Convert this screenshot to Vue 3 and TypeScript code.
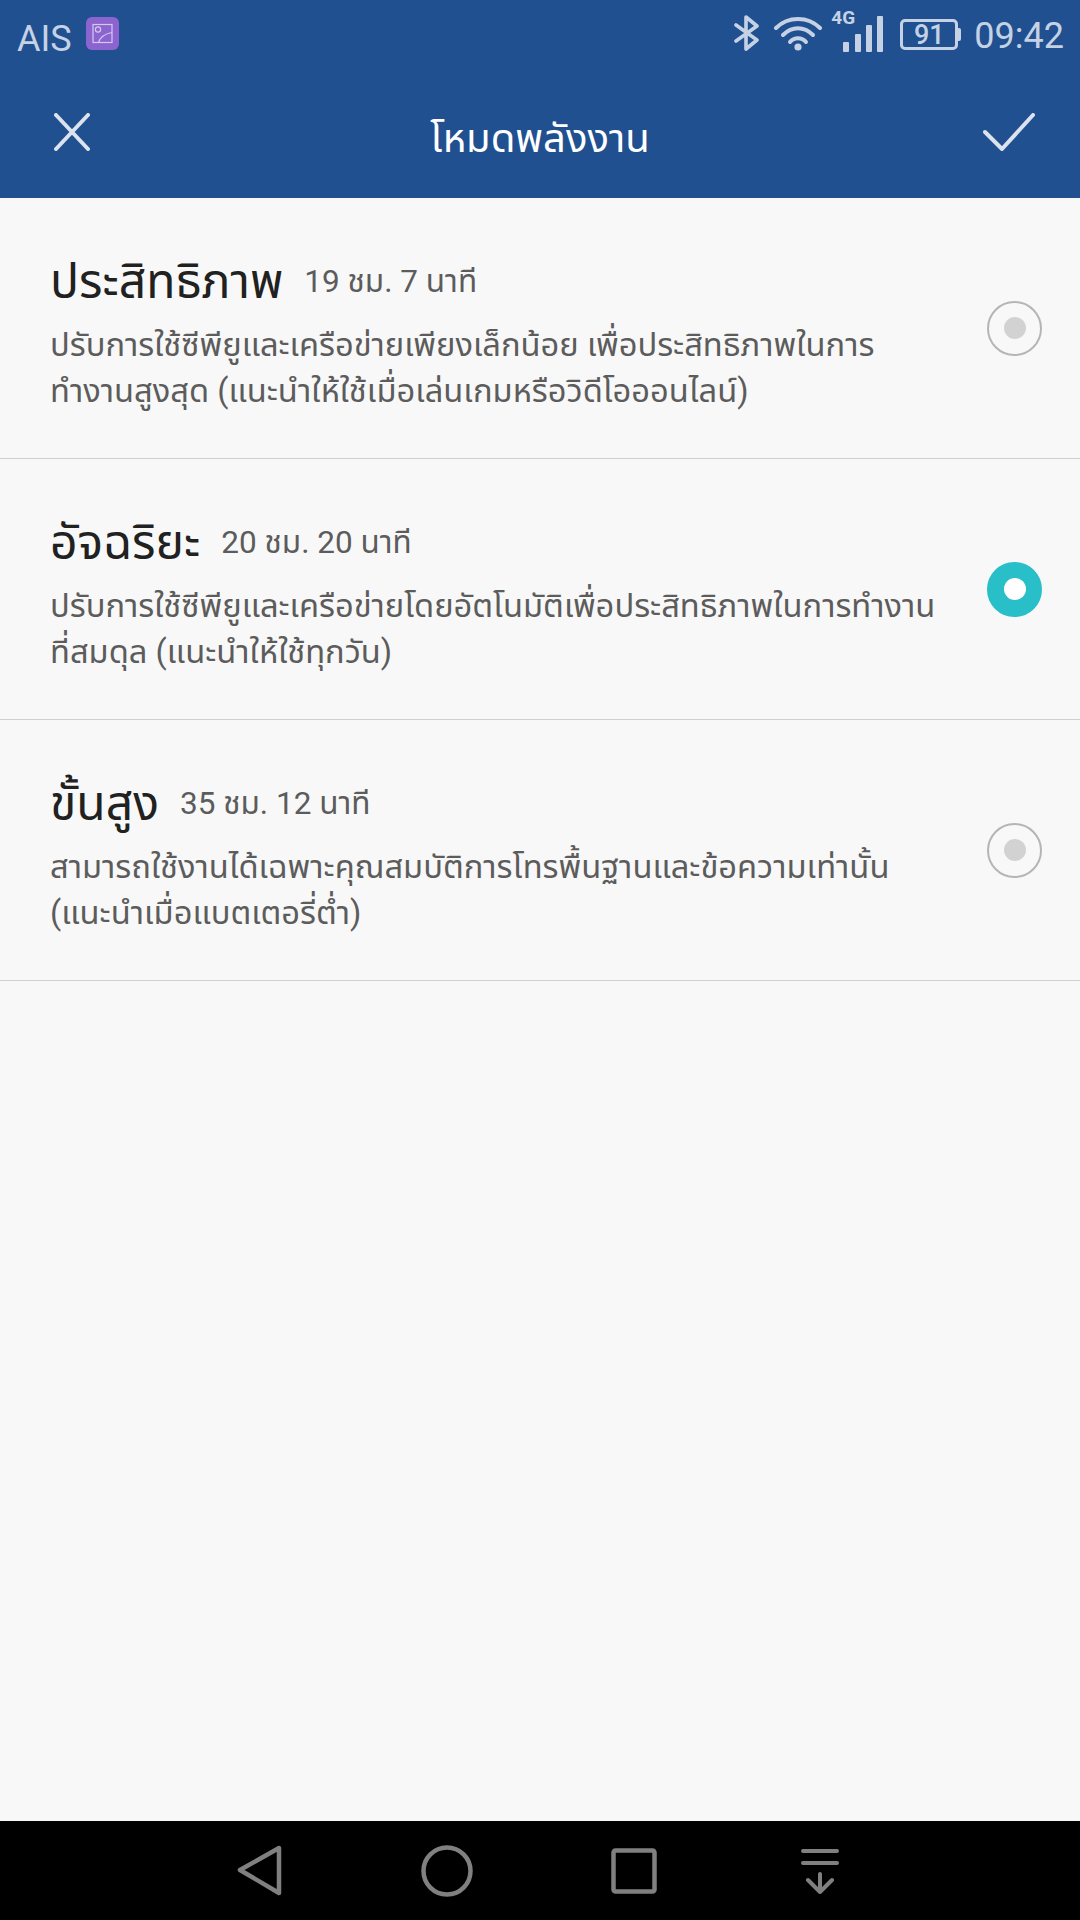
<script setup lang="ts">
interface Mode { title: string; time: string; lines: string[]; selected: boolean }
const modes: Mode[] = [
  { title: 'ประสิทธิภาพ', time: '19 ชม. 7 นาที', lines: ['ปรับการใช้ซีพียูและเครือข่ายเพียงเล็กน้อย เพื่อประสิทธิภาพในการ', 'ทำงานสูงสุด (แนะนำให้ใช้เมื่อเล่นเกมหรือวิดีโอออนไลน์)'], selected: false },
  { title: 'อัจฉริยะ', time: '20 ชม. 20 นาที', lines: ['ปรับการใช้ซีพียูและเครือข่ายโดยอัตโนมัติเพื่อประสิทธิภาพในการทำงาน', 'ที่สมดุล (แนะนำให้ใช้ทุกวัน)'], selected: true },
  { title: 'ขั้นสูง', time: '35 ชม. 12 นาที', lines: ['สามารถใช้งานได้เฉพาะคุณสมบัติการโทรพื้นฐานและข้อความเท่านั้น', '(แนะนำเมื่อแบตเตอรี่ต่ำ)'], selected: false },
]
</script>

<template>
  <div class="screen">
    <div class="top">
      <div class="status">
        <div class="status-left">
          <span class="carrier">AIS</span>
          <svg class="gallery" width="33" height="33" viewBox="0 0 33 33">
            <rect width="33" height="33" rx="6" fill="#8c64cf" />
            <rect x="7" y="7.5" width="19" height="18" fill="none" stroke="#d5c8ee" stroke-width="1.2" />
            <circle cx="12" cy="12.5" r="2.6" fill="none" stroke="#d5c8ee" stroke-width="1.2" />
            <path d="M12.5 25.5C14 20 18 17 26 15.5" fill="none" stroke="#d5c8ee" stroke-width="1.2" />
          </svg>
        </div>
        <div class="status-right">
          <svg class="bt" width="26" height="36" viewBox="0 0 26 36" fill="none" stroke="#c5d2e5" stroke-width="3.6" stroke-linejoin="round" stroke-linecap="round">
            <path d="M2 10L23 25L12 34V2L23 11L2 26" />
          </svg>
          <svg class="wifi" width="48" height="36" viewBox="0 0 48 36" fill="none" stroke="#c5d2e5" stroke-width="4" stroke-linecap="round">
            <path d="M2 13C14 1 34 1 46 13" />
            <path d="M9 20C18 11 30 11 39 20" />
            <path d="M16 27C20 22 28 22 32 27" />
            <circle cx="24" cy="32" r="3.6" fill="#c5d2e5" stroke="none" />
          </svg>
          <div class="signal">
            <span class="net">4G</span>
            <svg width="42" height="36" viewBox="0 0 42 36" fill="#c5d2e5">
              <rect x="1" y="26" width="6" height="10" rx="1" />
              <rect x="13" y="18" width="6" height="18" rx="1" />
              <rect x="24" y="9" width="6" height="27" rx="1" />
              <rect x="35" y="0" width="6" height="36" rx="1" />
            </svg>
          </div>
          <div class="battery"><span class="level">91</span></div>
          <span class="clock">09:42</span>
        </div>
      </div>
      <div class="appbar">
        <svg class="action close" width="38" height="38" viewBox="0 0 38 38" fill="none" stroke="#dde3ee" stroke-width="4" stroke-linecap="round">
          <path d="M3 2L35 36M35 2L3 36" />
        </svg>
        <h1 class="title">โหมดพลังงาน</h1>
        <svg class="action confirm" width="52" height="38" viewBox="0 0 52 38" fill="none" stroke="#dde3ee" stroke-width="4" stroke-linecap="round" stroke-linejoin="round">
          <path d="M2 19L19 36L50 2" />
        </svg>
      </div>
    </div>

    <main class="list">
      <div v-for="m in modes" :key="m.title" class="row">
        <div class="text">
          <div class="head">
            <span class="name">{{ m.title }}</span>
            <span class="time">{{ m.time }}</span>
          </div>
          <p v-for="l in m.lines" :key="l" class="line">{{ l }}</p>
        </div>
        <span class="radio" :class="{ on: m.selected }"><span class="dot"></span></span>
      </div>
    </main>

    <nav class="nav">
      <svg width="46" height="52" viewBox="0 0 46 52" fill="none" stroke="#808080" stroke-width="4.5" stroke-linejoin="round">
        <path d="M42 3V48L3 25Z" />
      </svg>
      <svg width="52" height="52" viewBox="0 0 52 52" fill="none" stroke="#808080" stroke-width="4.5">
        <circle cx="26" cy="26" r="23.5" />
      </svg>
      <svg width="46" height="46" viewBox="0 0 46 46" fill="none" stroke="#808080" stroke-width="4.5" stroke-linejoin="round">
        <rect x="2.5" y="2.5" width="41" height="41" rx="2" />
      </svg>
      <svg width="40" height="46" viewBox="0 0 40 46" fill="none" stroke="#808080" stroke-width="4" stroke-linecap="round" stroke-linejoin="round">
        <path d="M3 3H37M3 15H37M20 26V44M8 32L20 44L32 32" />
      </svg>
    </nav>
  </div>
</template>

<style scoped>
.screen {
  width: 1080px;
  height: 1920px;
  display: flex;
  flex-direction: column;
  background: #f8f8f8;
  font-family: Roboto, "Noto Sans Thai", "Noto Sans", sans-serif;
  overflow: hidden;
}
.top { background: #20508f; height: 198px; flex: none; }
.status {
  height: 72px;
  display: flex;
  justify-content: space-between;
  padding: 0 16px 0 17px;
  color: #c5d2e5;
}
.status-left { display: flex; align-items: flex-start; gap: 14px; }
.carrier { font-size: 36px; line-height: 36px; margin-top: 21px; }
.gallery { margin-top: 17px; }
.status-right { display: flex; align-items: flex-start; }
.bt { margin-top: 15px; }
.wifi { margin-top: 15px; margin-left: 14px; }
.signal { position: relative; margin-left: 20px; width: 44px; margin-top: 16px; }
.net {
  position: absolute;
  left: -11px;
  top: -8px;
  font-size: 19px;
  line-height: 20px;
  font-weight: 700;
}
.battery {
  position: relative;
  margin-left: 14px;
  margin-top: 19px;
  width: 58px;
  height: 31px;
  border: 3px solid #c5d2e5;
  border-radius: 5px;
  box-sizing: border-box;
  display: flex;
  align-items: center;
  justify-content: center;
}
.battery::after {
  content: "";
  position: absolute;
  right: -6px;
  top: 6px;
  width: 3px;
  height: 13px;
  background: #c5d2e5;
  border-radius: 0 2px 2px 0;
}
.level { font-size: 27px; line-height: 26px; font-weight: 500; }
.clock { font-size: 36px; line-height: 36px; margin-left: 16px; margin-top: 18px; }
.appbar {
  height: 126px;
  display: grid;
  grid-template-columns: 1fr auto 1fr;
  align-items: center;
  padding: 0 45px 6px 53px;
  box-sizing: border-box;
}
.close { justify-self: start; }
.confirm { justify-self: end; }
.title {
  margin: 14px 0 0;
  font-size: 40px;
  font-weight: 400;
  color: #fff;
  line-height: 56px;
  transform: translateX(-4px);
}
.list { flex: 1; }
.row {
  height: 261px;
  box-sizing: border-box;
  border-bottom: 1px solid #cfcfcf;
  display: flex;
  align-items: center;
  justify-content: space-between;
  padding: 0 38px 0 50px;
}
.text { padding-top: 6px; }
.head { display: flex; align-items: center; gap: 21px; height: 68px; margin-bottom: 6px; }
.name { font-size: 48px; color: #212121; line-height: 68px; }
.time { font-size: 31.5px; color: #5c5c5c; line-height: 40px; }
.line { margin: 0; font-size: 32.7px; line-height: 46.5px; color: #5c5c5c; white-space: nowrap; }
.radio {
  width: 55px;
  height: 55px;
  box-sizing: border-box;
  border: 2px solid #b5b5b5;
  border-radius: 50%;
  display: flex;
  align-items: center;
  justify-content: center;
  flex: none;
}
.dot { width: 22px; height: 22px; border-radius: 50%; background: #d2d2d2; }
.radio.on { background: #29bfc8; border-color: #29bfc8; }
.radio.on .dot { background: #fff; }
.nav {
  height: 99px;
  flex: none;
  background: #000;
  display: flex;
  align-items: center;
  padding: 0 0 0 237px;
}
.nav svg:nth-child(2) { margin-left: 138px; }
.nav svg:nth-child(3) { margin-left: 138px; }
.nav svg:nth-child(4) { margin-left: 143px; }
</style>
<style>
html, body { margin: 0; background: #f8f8f8; }
</style>
